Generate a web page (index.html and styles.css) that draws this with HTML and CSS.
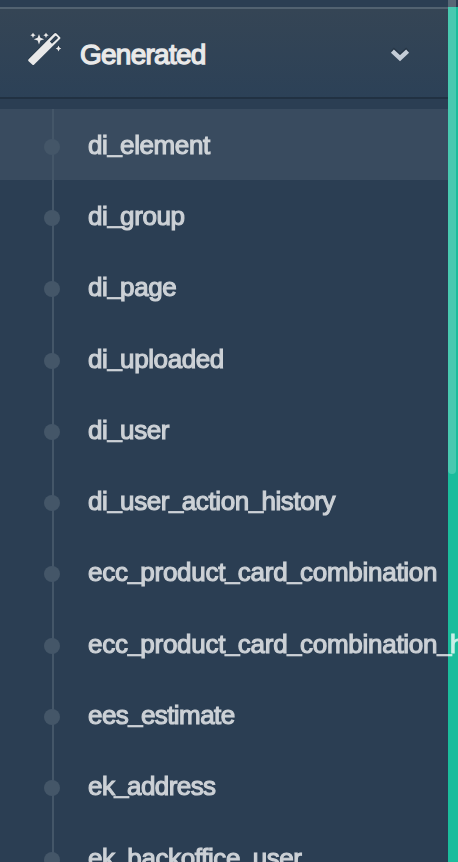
FILE: index.html
```html
<!DOCTYPE html>
<html lang="en">
<head>
<meta charset="utf-8">
<title>Generated</title>
<link rel="stylesheet" href="styles.css">
</head>
<body>
<div class="app">
  <nav class="sidebar">
    <div class="group">
      <svg class="wand" width="36" height="36" viewBox="0 0 36 36">
        <path class="wand-stick" fill-rule="evenodd" d="M1.6 30.2Q.7 29.2 1.6 28.2L27.3 2.5Q28.4 1.5 29.5 2.5L32.9 5.9Q34 7 32.9 8.1L7.2 33.5Q6.2 34.5 5.2 33.5ZM22.8 10.6L25 12.8L30.6 7.4Q31.2 6.8 30.6 6.2L29.4 5Q28.8 4.4 28.2 5Z"/>
        <path d="M12 3L13.4 6.8L17.2 8.2L13.4 9.6L12 13.4L10.6 9.6L6.8 8.2L10.6 6.8ZM6 1.5L6.9 3.3L8.7 4.2L6.9 5.1L6 6.9L5.1 5.1L3.3 4.2L5.1 3.3ZM19 1.5L19.9 3.3L21.7 4.2L19.9 5.1L19 6.9L18.1 5.1L16.3 4.2L18.1 3.3ZM31.5 14.5L32.4 16.6L34.2 17.5L32.4 18.4L31.5 20.5L30.6 18.4L28.8 17.5L30.6 16.6Z"/>
      </svg>
      <span class="title">Generated</span>
      <svg class="chevron" width="22" height="16" viewBox="0 0 22 16"><path d="M3.4 4.2L11 11.2L18.6 4.2"/></svg>
    </div>
    <ul class="items">
      <li class="active"><span>di<i>_</i>element</span></li>
      <li><span>di<i>_</i>group</span></li>
      <li><span>di<i>_</i>page</span></li>
      <li><span>di<i>_</i>uploaded</span></li>
      <li><span>di<i>_</i>user</span></li>
      <li><span>di<i>_</i>user<i>_</i>action<i>_</i>history</span></li>
      <li class="long"><span>ecc<i>_</i>product<i>_</i>card<i>_</i>combination</span></li>
      <li class="long"><span>ecc<i>_</i>product<i>_</i>card<i>_</i>combination<i>_</i>h</span></li>
      <li class="tight"><span>ees<i>_</i>estimate</span></li>
      <li class="tight"><span>ek<i>_</i>address</span></li>
      <li><span>ek<i>_</i>backoffice<i>_</i>user</span></li>
    </ul>
  </nav>
  <div class="page-edge"></div>
  <div class="scroll-thumb"></div>
</div>
</body>
</html>
```
FILE: styles.css
```css
body {
  margin: 0;
  overflow: hidden;
  font-family: "Liberation Sans", Arial, sans-serif;
}

.app {
  position: relative;
  display: flex;
  width: 458px;
  height: 862px;
  overflow: hidden;
  background: #2b3e53;
}

.sidebar {
  position: relative;
  z-index: 1;
  flex: 0 0 448px;
  width: 448px;
  min-width: 0;
  padding-top: 7px;
  box-sizing: border-box;
}

.page-edge {
  flex: 1;
  margin-top: 7px;
  background: #1abc9c;
}

.scroll-thumb {
  position: absolute;
  top: 0;
  left: 448px;
  width: 8px;
  height: 474px;
  border-radius: 0 0 4px 4px;
  background: linear-gradient(#586776 7px, #48c9b0 7px);
}

.group {
  display: flex;
  align-items: center;
  box-sizing: border-box;
  height: 92px;
  padding: 0 37px 0 27px;
  border-top: 2px solid #526271;
  border-bottom: 2px solid #213142;
  background: linear-gradient(#354555, #2c4157);
}

.wand {
  margin: -8px 17px 0 0;
  fill: #e9e9e9;
  filter: drop-shadow(0 -1px 0 #263646);
}

.title {
  flex: 1;
  margin-top: 4px;
  color: #e9e9e9;
  font-size: 28px;
  letter-spacing: -0.75px;
  -webkit-text-stroke: 1.3px #e9e9e9;
  text-shadow: 0 -1px 0 #263646;
}

.chevron {
  margin-top: 3px;
  fill: none;
  stroke: #c3ccd7;
  stroke-width: 4.4;
  filter: drop-shadow(0 -2px 0 #263646);
}

.items {
  position: relative;
  margin: 10px 0 0;
  padding: 0;
  list-style: none;
}

.items::before {
  content: "";
  position: absolute;
  top: 0;
  bottom: 0;
  left: 52px;
  width: 2px;
  background: #445668;
}

.items li {
  display: flex;
  align-items: center;
  box-sizing: border-box;
  height: 71.3px;
  padding: 0 0 0 44px;
  font-size: 26px;
  letter-spacing: -0.4px;
  white-space: nowrap;
}

.items li::before {
  content: "";
  position: relative;
  top: 2px;
  flex: 0 0 16px;
  height: 16px;
  margin-right: 28px;
  border-radius: 50%;
  background: #445668;
}

.items span {
  padding-top: 1px;
  color: #fff;
  opacity: 0.76;
  -webkit-text-stroke: 1.1px #fff;
}

.items i {
  position: relative;
  top: -2px;
  font-style: normal;
  letter-spacing: -1.8px;
  -webkit-text-stroke-width: 0.6px;
}

.items .long {
  letter-spacing: -0.27px;
}

.items .tight {
  letter-spacing: -0.57px;
}

.items .active {
  background: #394b5f;
}
```
